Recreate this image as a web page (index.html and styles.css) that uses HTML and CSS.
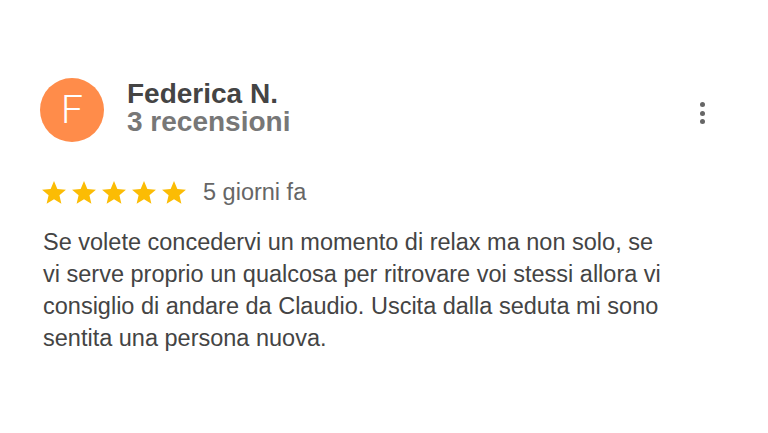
FILE: index.html
```html
<!DOCTYPE html>
<html lang="it">
<head>
<meta charset="utf-8">
<link rel="stylesheet" href="styles.css">
</head>
<body>
<div class="review">
  <div class="header">
    <div class="avatar">F</div>
    <div class="who">
      <div class="name">Federica N.</div>
      <div class="count">3 recensioni</div>
    </div>
    <div class="more">
      <span class="dot"></span><span class="dot"></span><span class="dot"></span>
    </div>
  </div>
  <div class="rating">
    <div class="stars">
      <svg viewBox="2 2 20 19.27" class="star"><path d="M12 17.27L18.18 21l-1.640-7.03L22 9.24l-7.19-.61L12 2 9.19 8.63 2 9.24l5.46 4.73L5.82 21z"/></svg>
      <svg viewBox="2 2 20 19.27" class="star"><path d="M12 17.27L18.18 21l-1.640-7.03L22 9.24l-7.19-.61L12 2 9.19 8.63 2 9.24l5.46 4.73L5.82 21z"/></svg>
      <svg viewBox="2 2 20 19.27" class="star"><path d="M12 17.27L18.18 21l-1.640-7.03L22 9.24l-7.19-.61L12 2 9.19 8.63 2 9.24l5.46 4.73L5.82 21z"/></svg>
      <svg viewBox="2 2 20 19.27" class="star"><path d="M12 17.27L18.18 21l-1.640-7.03L22 9.24l-7.19-.61L12 2 9.19 8.63 2 9.24l5.46 4.73L5.82 21z"/></svg>
      <svg viewBox="2 2 20 19.27" class="star"><path d="M12 17.27L18.18 21l-1.640-7.03L22 9.24l-7.19-.61L12 2 9.19 8.63 2 9.24l5.46 4.73L5.82 21z"/></svg>
    </div>
    <span class="date">5 giorni fa</span>
  </div>
  <p class="text">Se volete concedervi un momento di relax ma non solo, se vi serve proprio un qualcosa per ritrovare voi stessi allora vi consiglio di andare da Claudio. Uscita dalla seduta mi sono sentita una persona nuova.</p>
</div>
</body>
</html>
```
FILE: styles.css
```css
html, body {
  margin: 0;
  padding: 0;
  background: #fff;
}
body {
  font-family: "Liberation Sans", Arial, sans-serif;
  width: 768px;
  height: 433px;
  overflow: hidden;
}
.review {
  padding: 78px 40px 0 40px;
}
.header {
  display: flex;
  align-items: flex-start;
}
.avatar {
  width: 64px;
  height: 64px;
  border-radius: 50%;
  background: #ff8c4a;
  color: #fff;
  font-family: Roboto, "Liberation Sans", sans-serif;
  font-weight: 300;
  font-size: 39px;
  line-height: 64px;
  text-align: center;
  flex: none;
}
.who {
  margin-left: 23px;
  margin-top: 2px;
  display: flex;
  flex-direction: column;
  flex: 1;
}
.name {
  font-size: 28px;
  font-weight: bold;
  color: #444;
  line-height: 28px;
}
.count {
  font-size: 28px;
  font-weight: bold;
  color: #777;
  line-height: 28px;
}
.more {
  display: flex;
  flex-direction: column;
  gap: 3.5px;
  margin-right: 23px;
  margin-top: 24px;
}
.dot {
  width: 5px;
  height: 5px;
  border-radius: 50%;
  background: #666;
}
.rating {
  display: flex;
  align-items: center;
  margin-top: 38px;
  margin-left: 2px;
  height: 24px;
}
.stars {
  display: flex;
  gap: 6px;
}
.star {
  width: 24px;
  height: 23px;
  fill: #fbbc04;
  display: block;
}
.date {
  margin-left: 17px;
  font-size: 23.5px;
  line-height: 24px;
  color: #666;
}
.text {
  margin: 22px 0 0 3px;
  width: 622px;
  font-size: 23.5px;
  line-height: 32px;
  color: #444;
}
```
